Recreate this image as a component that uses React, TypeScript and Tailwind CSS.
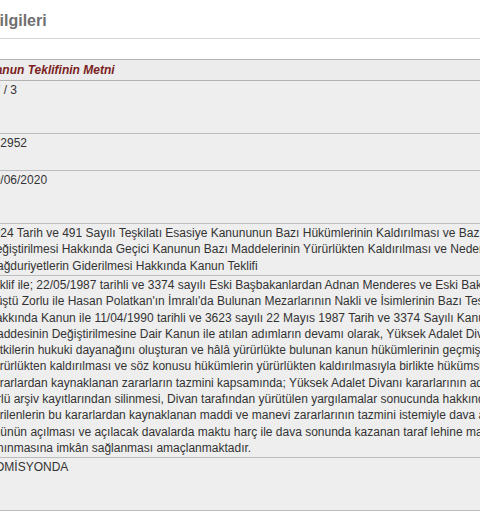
import React from "react";

const titleLines = [
  "1924 Tarih ve 491 Sayılı Teşkilatı Esasiye Kanununun Bazı Hükümlerinin Kaldırılması ve Bazı Hükümlerinin",
  "Değiştirilmesi Hakkında Geçici Kanunun Bazı Maddelerinin Yürürlükten Kaldırılması ve Nedeniyle Ortaya Çıkan",
  "Mağduriyetlerin Giderilmesi Hakkında Kanun Teklifi",
];

const bodyLines = [
  "Teklif ile; 22/05/1987 tarihli ve 3374 sayılı Eski Başbakanlardan Adnan Menderes ve Eski Bakanlardan Fatin",
  "Rüştü Zorlu ile Hasan Polatkan'ın İmralı'da Bulunan Mezarlarının Nakli ve İsimlerinin Bazı Tesislere Verilmesi",
  "Hakkında Kanun ile 11/04/1990 tarihli ve 3623 sayılı 22 Mayıs 1987 Tarih ve 3374 Sayılı Kanunun 2 nci",
  "Maddesinin Değiştirilmesine Dair Kanun ile atılan adımların devamı olarak, Yüksek Adalet Divanının kuruluşu",
  "yetkilerin hukuki dayanağını oluşturan ve hâlâ yürürlükte bulunan kanun hükümlerinin geçmişe etkili olarak",
  "yürürlükten kaldırılması ve söz konusu hükümlerin yürürlükten kaldırılmasıyla birlikte hükümsüz hale gelen",
  "kararlardan kaynaklanan zararların tazmini kapsamında; Yüksek Adalet Divanı kararlarının adli sicil ve her",
  "türlü arşiv kayıtlarından silinmesi, Divan tarafından yürütülen yargılamalar sonucunda hakkında hüküm",
  "verilenlerin bu kararlardan kaynaklanan maddi ve manevi zararlarının tazmini istemiyle dava açılmasının",
  "önünün açılması ve açılacak davalarda maktu harç ile dava sonunda kazanan taraf lehine maktu vekâlet",
  "tanınmasına imkân sağlanması amaçlanmaktadır.",
];

function Row({ h, lines }: { h: string; lines: string[] }) {
  return (
    <div className={`${h} border-b border-[#bdbdbd] bg-[#eeeeee] pt-[1px]`}>
      {lines.map((l, i) => (
        <div key={i} className="whitespace-nowrap leading-[16.3px]">
          {l}
        </div>
      ))}
    </div>
  );
}

export default function App() {
  return (
    <div className="w-[480px] h-[524px] overflow-hidden bg-white font-['Liberation_Sans',Arial,sans-serif] text-[12px] text-[#333333]">
      <div className="-ml-[13px] w-[520px]">
        <div className="h-[39px] border-b border-[#d4d4d4] pt-[11px] pl-[1px] text-[16px] font-bold leading-[20px] text-[#6f6f6f] whitespace-nowrap">
          Bilgileri
        </div>
        <div className="h-[20px]" />
        <div className="h-[22px] border-y border-[#b3b3b3] bg-[#ececec] pt-[2px] text-[12px] font-bold italic leading-[16px] text-[#7a1e1e] whitespace-nowrap">
          Kanun Teklifinin Metni
        </div>
        <Row h="h-[53px]" lines={["27 / 3"]} />
        <Row h="h-[37px]" lines={["2/ 2952"]} />
        <Row h="h-[53px]" lines={["09/06/2020"]} />
        <Row h="h-[52px]" lines={titleLines} />
        <Row h="h-[182px]" lines={bodyLines} />
        <Row h="h-[53px]" lines={["KOMİSYONDA"]} />
      </div>
    </div>
  );
}
